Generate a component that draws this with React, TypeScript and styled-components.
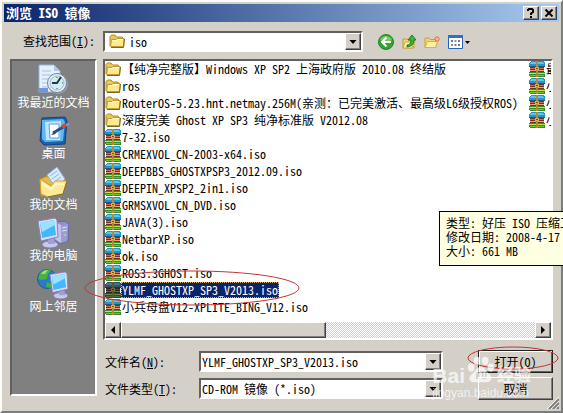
import React from "react";
import styled, { createGlobalStyle, css } from "styled-components";

const face = "#d4d0c8";
const navy = "#0a246a";
const uiFont = `"Noto Sans Mono CJK SC", "Liberation Mono", "Noto Sans CJK SC", monospace`;

const GlobalStyle = createGlobalStyle`
  * { box-sizing: border-box; }
  body { margin: 0; background: ${face}; overflow: hidden; }
  button, input, select { font: inherit; color: inherit; margin: 0; }
`;

const raised = css`
  border: 1px solid;
  border-color: #fff #404040 #404040 #fff;
  box-shadow: inset -1px -1px 0 #808080;
  background: ${face};
`;

const sunken = css`
  border: 2px solid;
  border-color: #606060 #fff #fff #606060;
`;

const Dialog = styled.main`
  position: relative;
  padding: 2px;
  border: 2px solid;
  border-color: #fcfcfa #7c7c7c #7c7c7c #fcfcfa;
  background: ${face};
  color: #000;
  font: 12px/14px ${uiFont};
  white-space: pre;
`;

const TitleBar = styled.header`
  display: flex;
  align-items: center;
  gap: 2px;
  height: 18px;
  padding: 0 2px;
  background: linear-gradient(90deg, ${navy}, #a6caf0);
`;

const Title = styled.h1`
  flex: 1;
  margin: 0;
  font-size: 13px;
  line-height: 16px;
  font-weight: 700;
  color: #fff;
`;

const CaptionButton = styled.button`
  ${raised}
  display: flex;
  align-items: center;
  justify-content: center;
  width: 16px;
  height: 14px;
  padding: 0;
`;

const Body = styled.div`
  display: grid;
  grid-template-columns: 87px 1fr;
  grid-template-rows: 37px auto auto;
  column-gap: 6px;
  padding: 0 6px 9px;
`;

const LookLabel = styled.label`
  align-self: center;
  justify-self: end;
  padding-right: 2px;
`;

const Toolbar = styled.div`
  display: flex;
  align-items: center;
  padding-top: 2px;
`;

const Combo = styled.div<{ $width?: string }>`
  ${sunken}
  display: flex;
  align-items: center;
  width: ${(p) => p.$width ?? "100%"};
  height: 21px;
  background: #fff;
  position: relative;
`;

const fieldText = css`
  flex: 1;
  min-width: 0;
  width: 100%;
  height: 17px;
  border: 0;
  outline: 0;
  background: transparent;
  line-height: 16px;
`;

const TextField = styled.input`
  ${fieldText}
  padding: 0 1px;
`;

const SelectField = styled.select<{ $indent?: boolean }>`
  ${fieldText}
  appearance: none;
  padding: 0 18px 0 ${(p) => (p.$indent ? "24px" : "1px")};
`;

const ComboIcon = styled.span`
  position: absolute;
  left: 4px;
  top: 0;
  display: flex;
`;

const DropMark = styled.span`
  ${raised}
  position: absolute;
  right: 0;
  top: 0;
  display: flex;
  align-items: center;
  justify-content: center;
  width: 16px;
  height: 17px;
  pointer-events: none;
`;

const Tools = styled.div`
  display: flex;
  align-items: center;
  gap: 7px;
  margin-left: 15px;
`;

const ToolButton = styled.button`
  display: flex;
  align-items: center;
  padding: 0;
  border: 0;
  background: none;
`;

const Places = styled.nav`
  ${sunken}
  grid-row: 2 / 4;
  margin-bottom: 4px;
  padding-top: 3px;
  background: #808080;
  display: flex;
  flex-direction: column;
  align-items: center;
  gap: 7px;
`;

const Place = styled.button`
  display: flex;
  flex-direction: column;
  align-items: center;
  padding: 0;
  border: 0;
  background: none;
  color: #fff;
  line-height: 12px;
`;

const FilePane = styled.section`
  position: relative;
  min-width: 0;
`;

const FileView = styled.div`
  ${sunken}
  background: #fff;
`;

const FileList = styled.ul`
  display: grid;
  grid-template-rows: repeat(15, 17px);
  grid-auto-flow: column;
  grid-auto-columns: max-content;
  column-gap: 10px;
  margin: 0;
  padding: 0 0 6px;
  list-style: none;
  overflow: hidden;
`;

const FileItem = styled.button<{ $selected?: boolean }>`
  display: flex;
  align-items: flex-start;
  height: 17px;
  padding: 0;
  border: 0;
  background: none;
  text-align: left;
  svg { filter: ${(p) => (p.$selected ? "brightness(0.6) saturate(0.6) hue-rotate(20deg)" : "none")}; }
`;

const FileName = styled.span<{ $selected?: boolean }>`
  padding: 0 1px;
  line-height: 16px;
  color: ${(p) => (p.$selected ? "#fff" : "#000")};
  background: ${(p) => (p.$selected ? navy : "transparent")};
  outline: ${(p) => (p.$selected ? "1px dotted #d8b060" : "none")};
  outline-offset: -1px;
`;

const ScrollBar = styled.div`
  display: flex;
  height: 16px;
  background: repeating-conic-gradient(#fff 0 25%, ${face} 0 50%) 0 0 / 2px 2px;
`;

const ScrollArrow = styled.button`
  ${raised}
  display: flex;
  align-items: center;
  justify-content: center;
  width: 16px;
  padding: 0;
`;

const ScrollThumb = styled.div`
  ${raised}
  flex: 0 0 46%;
  margin-right: auto;
`;

const Footer = styled.form`
  position: relative;
  display: grid;
  grid-template-columns: 94px 1fr 75px;
  grid-auto-rows: 23px;
  row-gap: 4px;
  align-items: center;
  padding: 10px 0 0 2px;
`;

const FieldCell = styled.div`
  margin-right: 35px;
`;

const ActionWrap = styled.div`
  position: relative;
`;

const ActionButton = styled.button<{ $primary?: boolean }>`
  ${raised}
  width: 100%;
  height: 23px;
  padding: 0;
  ${(p) => p.$primary && "border-color: #202020; box-shadow: inset 1px 1px 0 #fff, inset -1px -1px 0 #606060;"}
`;

const RingBox = styled.svg<{ $x: number; $y: number }>`
  position: absolute;
  left: ${(p) => p.$x}px;
  top: ${(p) => p.$y}px;
  pointer-events: none;
  fill: none;
  stroke: #c43434;
`;

const Tooltip = styled.div`
  position: absolute;
  left: 336px;
  top: 152px;
  width: 140px;
  padding: 4px 6px 7px;
  border: 1px solid #000;
  background: #ffffe1;
`;

const Watermark = styled.div`
  position: absolute;
  right: 22px;
  top: 26px;
  pointer-events: none;
  color: rgba(255, 255, 255, 0.72);
  font-family: "Liberation Sans", "Noto Sans CJK SC", sans-serif;
  font-size: 12px;
  line-height: 14px;
`;

const WatermarkLogo = styled.div`
  display: flex;
  align-items: center;
  height: 20px;
  gap: 2px;
  font-weight: 700;
  font-size: 17px;
  b { font-size: 21px; }
  svg { margin-top: -12px; }
`;

const Grip = styled.svg`
  position: absolute;
  right: 2px;
  bottom: 2px;
`;

const Arrow = ({ dir }: { dir: "down" | "left" | "right" }) => (
  <svg width="8" height="8" aria-hidden="true">
    <path d={dir === "down" ? "M0.5 2h7L4 6z" : dir === "left" ? "M6 0v8L2 4z" : "M2 0v8l4-4z"} />
  </svg>
);

const Folder = () => (
  <svg width="16" height="16" viewBox="0 0 16 16" aria-hidden="true">
    <path d="M1 13V3.5L2.5 2H6l1.5 2H13l1 1v8z" fill="#e9c956" stroke="#b58a22" />
    <path d="M1.5 13.5 2.5 6.5H7L8 5.5h7L14.5 13.5z" fill="#fdeb91" stroke="#c69a2e" />
    <path d="M2 14.5h12.5L15.5 6" fill="none" stroke="#77652b" />
    <path d="M3.5 7.5h4l1-1h5.5" fill="none" stroke="#fffad0" />
  </svg>
);

const Archive = () => (
  <svg width="16" height="16" viewBox="0 0 16 16" shapeRendering="crispEdges" aria-hidden="true">
    <path d="M2 0h12l2 2v4H0V2z" fill="#2496ce" />
    <path d="M2 1h12l1 2H1z" fill="#62c4e6" />
    <path d="M0 5h16v1H0z" fill="#165c86" />
    <path d="M1 6h14v5H1z" fill="#6b3426" />
    <path d="M1 7h14v1H1z" fill="#dc6842" />
    <path d="M1 9h14v1H1z" fill="#e8a088" />
    <path d="M0 11h16v4l-1 1H1l-1-1z" fill="#3c8a28" />
    <path d="M0 12h16v1H0z" fill="#b6ea48" />
    <path d="M1 14h14v1H1z" fill="#68c530" />
    <path d="M7 0h2v16H7z" fill="#b98a34" />
    <path d="M6 6h4v3H6z" fill="#d9ae4c" />
    <path d="M7 7h2v1H7z" fill="#795018" />
  </svg>
);

const BackIcon = () => (
  <svg width="16" height="16" viewBox="0 0 16 16" aria-hidden="true">
    <circle cx="8" cy="8" r="7.5" fill="#36a332" stroke="#238426" />
    <path d="M2 6a6.5 6.5 0 0 1 12 0q-6 3-12 0" fill="#79ca62" />
    <path d="M8.5 3.5 4 8l4.5 4.5M4.5 8H13" fill="none" stroke="#fff" strokeWidth="2" />
  </svg>
);

const UpIcon = () => (
  <svg width="16" height="16" viewBox="0 0 16 16" aria-hidden="true">
    <path d="M2 14V5h4l1 1h6v8z" fill="#f4d873" stroke="#c59a32" />
    <path d="m2 14 2-6h9l-2 6z" fill="#fff0a4" stroke="#cda543" />
    <path d="M6 11q4 0 4-5H7l4-5 4 5h-2q0 6-7 7z" fill="#3db43a" stroke="#217d24" />
  </svg>
);

const NewFolderIcon = () => (
  <svg width="17" height="16" viewBox="0 0 17 16" aria-hidden="true">
    <path d="M1 13.5V4h4l1 1.5h6v8z" fill="#f3d46b" stroke="#cba03e" />
    <path d="m1 13.5 2.5-6h10l-2 6z" fill="#fff0a4" stroke="#d8af4c" />
    <path d="M13 2v6M10 5h6M11 3l4 4M15 3l-4 4" stroke="#e0643c" />
    <circle cx="13" cy="5" r="1.5" fill="#ffb878" />
  </svg>
);

const ViewsIcon = () => (
  <svg width="22" height="16" viewBox="0 0 22 16" aria-hidden="true">
    <path d="M0.5 1.5h14v13h-14z" fill="#fff" stroke="#2763b4" />
    <path d="M0 1h15v3H0z" fill="#2e70cc" />
    <path d="M3 6h2v2H3zM10 10h2v2h-2z" fill="#4f7ac4" />
    <path d="M6.5 6h2v2h-2zM3 10h2v2H3z" fill="#7aa07c" />
    <path d="M10 6h2v2h-2zM6.5 10h2v2h-2z" fill="#a96758" />
    <path d="M17 7h5l-2.5 3z" fill="#000" />
  </svg>
);

const RecentIcon = () => (
  <svg width="32" height="32" viewBox="0 0 32 32" aria-hidden="true">
    <path d="M2 1h15l6 6v21H2z" fill="#e6f0fd" stroke="#91b4e4" />
    <path d="M17 1v6h6z" fill="#a8c8f2" />
    <path d="M5 7h9M5 11h13M5 15h8M5 19h7M5 23h7" stroke="#a5c1e8" />
    <path d="M2 28h9v-4H2z" fill="#6a98dc" />
    <circle cx="21" cy="20" r="10" fill="#8da2b8" />
    <circle cx="20" cy="19" r="9.5" fill="#e7edf2" stroke="#71869e" />
    <circle cx="20" cy="19" r="7" fill="#d0ecf8" stroke="#a3b9ca" />
    <path d="m24 13-4 6h-5" fill="none" stroke="#25374d" strokeWidth="2" />
    <path d="M20 13v1M26 19h-1M20 25v-1" stroke="#3f556d" />
  </svg>
);

const DesktopIcon = () => (
  <svg width="32" height="32" viewBox="0 0 32 32" aria-hidden="true">
    <path d="M4 3 27 2l2 4-2 23-21 1-4-4z" fill="#1a61ae" stroke="#0e438a" />
    <path d="m4 5 21-1 2 3-2 19-18 1-3-3z" fill="#60b6f1" />
    <path d="m7 7 16-1-1 19H8z" fill="#bce8ff" />
    <path d="M11 9h10v14h-9z" fill="#fff" stroke="#609ccc" />
    <path d="m15 18 12-7" stroke="#21518f" strokeWidth="3" />
    <path d="m13 20 3-3 2 2z" fill="#274970" />
    <path d="m24 12 4-2" stroke="#de4431" strokeWidth="4" />
    <path d="m28 10 3-1" stroke="#7ea7cf" strokeWidth="2" />
  </svg>
);

const DocumentsIcon = () => (
  <svg width="32" height="32" viewBox="0 0 32 32" aria-hidden="true">
    <path d="m3 13 7-3 5 3 13 1-3 15-21 1z" fill="#e4b946" stroke="#b98c25" />
    <path d="m10 9 10-8 8 12-9 9z" fill="#d7ecfb" stroke="#8cb4db" />
    <path d="m13 10 7-5M15 13l7-5M17 16l7-5" stroke="#88b7e2" />
    <path d="m3 13 11 7 4-5h12l-4 13-15 3-7-3z" fill="#ffe994" stroke="#cf9f32" />
    <path d="m5 17 9 6 6-5h7" fill="none" stroke="#fff7cc" strokeWidth="2" />
    <path d="m11 31 15-3 4-13" fill="none" stroke="#83672a" />
  </svg>
);

const Monitor = () => (
  <>
    <ellipse cx="13" cy="27.5" rx="8" ry="3.5" fill="#c9c9ee" stroke="#7f80b7" />
    <path d="m11 21 6-1 1 7h-7z" fill="#a0a0d2" />
    <path d="m1 4 17-3 2 2 1 17-17 4z" fill="#dddcfa" stroke="#8382be" />
    <path d="m3 6 14-3 2 15L5 21z" fill="#43b7ff" />
    <path d="m3 6 14-3 1 5-13 7z" fill="#9be2ff" />
  </>
);

const ComputerIcon = () => (
  <svg width="32" height="32" viewBox="0 0 32 32" aria-hidden="true">
    <path d="m18 5 10-1 4 3-1 17-8 3-6-4z" fill="#8e8fc9" stroke="#6668a5" />
    <path d="m18 5 6 3v18l-6-4z" fill="#c2c2eb" />
    <path d="m24 8 7-1-1 17-6 2z" fill="#9c9bd4" />
    <path d="m25 11 5-1M25 14l5-1" stroke="#e2e2fb" />
    <circle cx="28" cy="18" r="1" fill="#9be45c" />
    <Monitor />
  </svg>
);

const NetworkIcon = () => (
  <svg width="32" height="32" viewBox="0 0 32 32" aria-hidden="true">
    <circle cx="10" cy="11" r="9.5" fill="#2979cc" stroke="#1b5d98" />
    <path d="M3 5q5-5 11-3l-3 4-1 5-5 1-4-1zM10 14l5 2-1 4-5-1z" fill="#44b43c" />
    <path d="M4 6q2-4 7-4l-3 4z" fill="#9ddf74" />
    <g transform="translate(12 3) scale(.9)"><Monitor /></g>
  </svg>
);

const Paw = () => (
  <svg width="28" height="28" viewBox="0 0 34 32" fill="currentColor" aria-hidden="true">
    <ellipse cx="5" cy="13" rx="4" ry="5" />
    <ellipse cx="12" cy="5" rx="4" ry="5" />
    <ellipse cx="22" cy="5" rx="4" ry="5" />
    <ellipse cx="29" cy="13" rx="4" ry="5" />
    <path fillRule="evenodd" d="M17 12c5 0 6 6 10 9 5 5 2 10-3 10H9c-7 0-8-6-3-10 4-3 6-9 11-9zM11 19v8h4v-8zm7 0v8h6v-8h-2v6h-2v-6z" />
  </svg>
);

const places = [
  { name: "我最近的文档", Icon: RecentIcon },
  { name: "桌面", Icon: DesktopIcon },
  { name: "我的文档", Icon: DocumentsIcon },
  { name: "我的电脑", Icon: ComputerIcon },
  { name: "网上邻居", Icon: NetworkIcon },
];

const folders = [
  "【纯净完整版】Windows XP SP2 上海政府版 2010.08 终结版",
  "ros",
  "RouterOS-5.23.hnt.netmay.256M(亲测：已完美激活、最高级L6级授权ROS)",
  "深度完美 Ghost XP SP3 纯净标准版 V2012.08",
];

const selectedFile = "YLMF_GHOSTXP_SP3_V2013.iso";

const archives = [
  "7-32.iso",
  "CRMEXVOL_CN-2003-x64.iso",
  "DEEPBBS_GHOSTXPSP3_2012.09.iso",
  "DEEPIN_XPSP2_2in1.iso",
  "GRMSXVOL_CN_DVD.iso",
  "JAVA(3).iso",
  "NetbarXP.iso",
  "ok.iso",
  "ROS3.3GHOST.iso",
  selectedFile,
  "小兵母盘V12-XPLITE_BING_V12.iso",
  "最",
  "小",
  "小",
  "小",
];

export default function App() {
  return (
    <Dialog>
      <GlobalStyle />
      <TitleBar>
        <Title>浏览 ISO 镜像</Title>
        <CaptionButton aria-label="帮助">
          <svg width="8" height="10" aria-hidden="true">
            <path d="M1 3V2l1-1h3l1 1v2L4 5.5V7M4 8v2" fill="none" stroke="#000" strokeWidth="2" />
          </svg>
        </CaptionButton>
        <CaptionButton aria-label="关闭">
          <svg width="8" height="8" aria-hidden="true">
            <path d="m0.5 0.5 7 7M7.5 0.5l-7 7" stroke="#000" strokeWidth="2" />
          </svg>
        </CaptionButton>
      </TitleBar>
      <Body>
        <LookLabel htmlFor="look">查找范围(<u>I</u>):</LookLabel>
        <Toolbar>
          <Combo $width="260px">
            <ComboIcon><Folder /></ComboIcon>
            <SelectField id="look" $indent><option>iso</option></SelectField>
            <DropMark><Arrow dir="down" /></DropMark>
          </Combo>
          <Tools>
            <ToolButton aria-label="后退"><BackIcon /></ToolButton>
            <ToolButton aria-label="向上"><UpIcon /></ToolButton>
            <ToolButton aria-label="新建文件夹"><NewFolderIcon /></ToolButton>
            <ToolButton aria-label="查看"><ViewsIcon /></ToolButton>
          </Tools>
        </Toolbar>
        <Places>
          {places.map(({ name, Icon }) => (
            <Place key={name}><Icon />{name}</Place>
          ))}
        </Places>
        <FilePane>
          <FileView>
            <FileList>
              {folders.map((name) => (
                <li key={name}><FileItem><Folder /><FileName>{name}</FileName></FileItem></li>
              ))}
              {archives.map((name, i) => (
                <li key={i}>
                  <FileItem $selected={name === selectedFile}>
                    <Archive />
                    <FileName $selected={name === selectedFile}>{name}</FileName>
                  </FileItem>
                </li>
              ))}
            </FileList>
            <ScrollBar>
              <ScrollArrow aria-label="向左滚动"><Arrow dir="left" /></ScrollArrow>
              <ScrollThumb />
              <ScrollArrow aria-label="向右滚动"><Arrow dir="right" /></ScrollArrow>
            </ScrollBar>
          </FileView>
          <RingBox $x={-19} $y={211} width="216" height="37" aria-hidden="true">
            <ellipse cx="108" cy="18" rx="107" ry="17" />
          </RingBox>
          <Tooltip role="tooltip">{"类型: 好压 ISO 压缩工\n修改日期: 2008-4-17\n大小: 661 MB"}</Tooltip>
        </FilePane>
        <Footer onSubmit={(e) => e.preventDefault()}>
          <label htmlFor="name">文件名(<u>N</u>):</label>
          <FieldCell>
            <Combo>
              <TextField id="name" defaultValue={selectedFile} />
              <DropMark><Arrow dir="down" /></DropMark>
            </Combo>
          </FieldCell>
          <ActionWrap>
            <ActionButton $primary>打开(<u>O</u>)</ActionButton>
            <RingBox $x={-11} $y={-4} width="92" height="24" aria-hidden="true">
              <ellipse cx="46" cy="12" rx="45" ry="11" />
            </RingBox>
          </ActionWrap>
          <label htmlFor="type">文件类型(<u>T</u>):</label>
          <FieldCell>
            <Combo>
              <SelectField id="type"><option>CD-ROM 镜像 (*.iso)</option></SelectField>
              <DropMark><Arrow dir="down" /></DropMark>
            </Combo>
          </FieldCell>
          <ActionButton type="button">取消</ActionButton>
          <Watermark>
            <WatermarkLogo><b>Bai</b><Paw />经验</WatermarkLogo>
            jingyan.baidu.com
          </Watermark>
        </Footer>
      </Body>
      <Grip width="12" height="12" aria-hidden="true">
        <path d="M0 12 12 0M4 12l8-8M8 12l4-4" stroke="#fff" />
        <path d="M2 12 12 2M6 12l6-6M10 12l2-2" stroke="#808080" strokeWidth="2" />
      </Grip>
    </Dialog>
  );
}
